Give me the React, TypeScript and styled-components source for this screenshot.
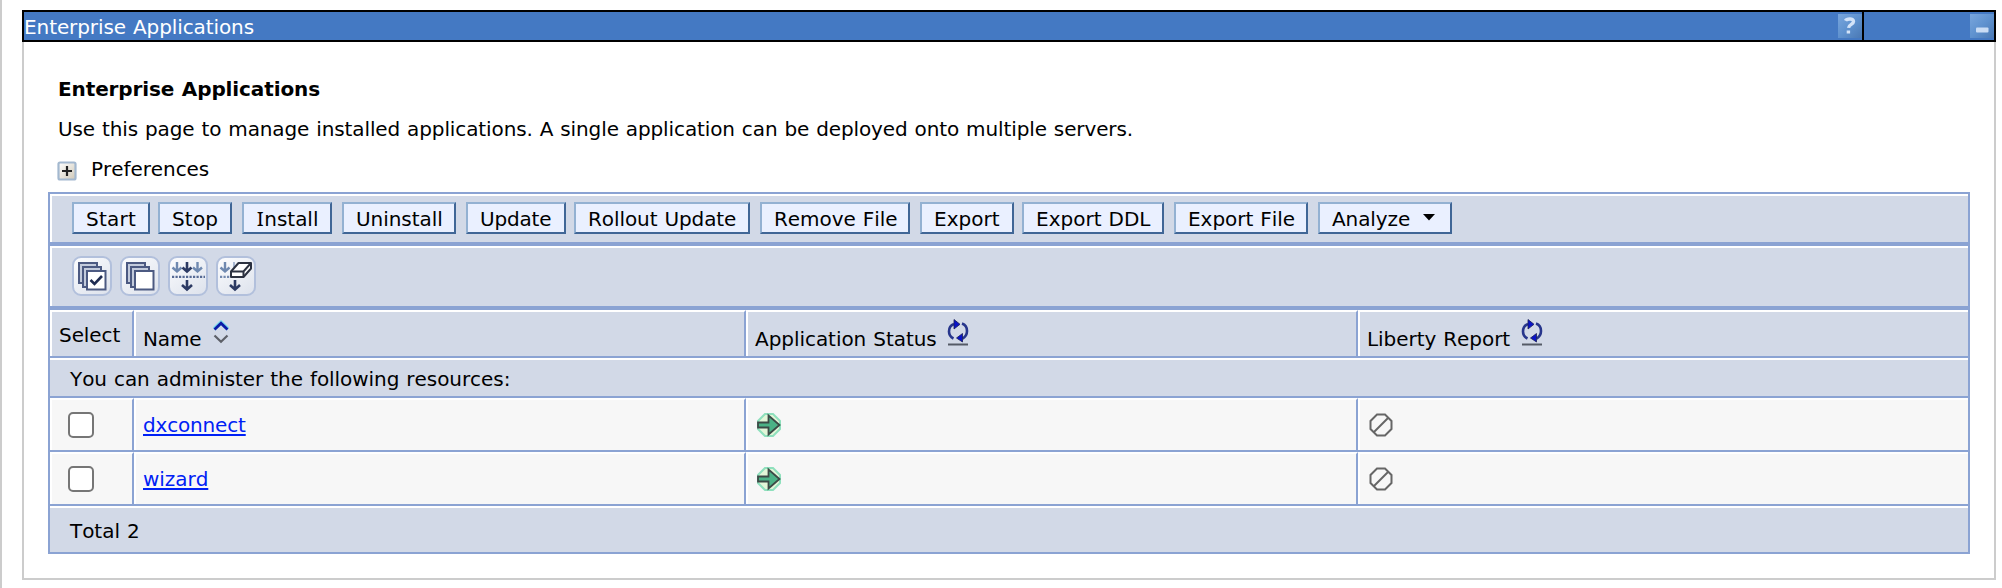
import React from "react";
import styled, { createGlobalStyle, css } from "styled-components";

const line = "#8ba3d3";
const fill = "#d2d9e7";
const rowFill = "#f7f7f7";
const grey = "#cccccc";

const GlobalStyle = createGlobalStyle`
  *, *::before, *::after { box-sizing: border-box; }
  body {
    margin: 0;
    background: #fff;
    color: #000;
    font: 20px/24px Verdana, "DejaVu Sans", sans-serif;
    font-kerning: none;
    word-spacing: 0.68px;
  }
  svg { display: block; flex: none; }
`;

const Page = styled.div`
  height: 588px;
  border-left: 2px solid ${grey};
  padding: 10px 6px 8px 20px;
  overflow: hidden;
`;

const Portlet = styled.section`
  height: 570px;
  display: flex;
  flex-direction: column;
`;

const TitleBar = styled.header`
  display: flex;
  height: 32px;
  border: 2px solid #000;
  background: #4479c3;
  color: #fff;
`;

const TitleCell = styled.div`
  flex: 1;
  display: flex;
  justify-content: space-between;
  align-items: flex-start;
  padding-top: 2px;
`;

const TitleText = styled.span`
  margin-top: 1px;
`;

const ToggleCell = styled.div`
  width: 132px;
  display: flex;
  justify-content: flex-end;
  align-items: center;
  border-left: 2px solid #000;
`;

const Body = styled.div`
  flex: 1;
  border: 2px solid ${grey};
  border-top: 0;
  padding: 35px 24px 0;
`;

const Txt = styled.span<{ $ls?: number }>`
  letter-spacing: ${(p) => p.$ls ?? 0}px;
  white-space: nowrap;
`;

const SerifCap = styled.span`
  font-family: "Noto Sans", sans-serif;
  font-size: 20.5px;
  line-height: 1;
  padding: 0 0.7px;
`;

const Intro = styled.div`
  padding-left: 10px;
`;

const Heading = styled.h1`
  margin: 0 0 16px;
  font-size: 20px;
  font-weight: bold;
`;

const Lead = styled.p`
  margin: 0 0 16px;
`;

const Preferences = styled.div`
  display: flex;
  height: 35px;
  align-items: flex-start;
  gap: 14px;
  svg { margin: 4px 0 0 -1px; }
`;

const Grid = styled.div`
  border: 2px solid ${line};
`;

const Toolbar = styled.div<{ $height: number; $top: number }>`
  display: flex;
  align-items: flex-start;
  height: ${(p) => p.$height}px;
  padding: ${(p) => p.$top}px 0 0 20px;
  border-top: 2px solid #fff;
  border-left: 2px solid #fff;
  background: ${fill};
`;

const Rule = styled.div`
  height: 4px;
  background: ${line};
`;

const ActionButton = styled.button<{ $width: number; $after: number }>`
  width: ${(p) => p.$width}px;
  height: 32px;
  margin: 0 ${(p) => p.$after}px 0 0;
  padding: 2px 0 0 12px;
  display: flex;
  align-items: center;
  border: 2px solid;
  border-color: #93b1d2 #406696 #406696 #93b1d2;
  background: #eaf0ff;
  color: #000;
  font: inherit;
  font-kerning: none;
  word-spacing: inherit;
  svg { margin: -4px 0 0 12.5px; }
`;

const IconButton = styled.button`
  width: 40px;
  height: 40px;
  margin: 0 8px 0 0;
  padding: 0;
  border: 2px solid #b2c0dc;
  border-radius: 9px;
  background: linear-gradient(145deg, #fbfcfe, #dde2ec);
  svg { margin: -2px; }
`;

const Row = styled.div<{ $height: number }>`
  display: grid;
  grid-template-columns: 84px 612px 612px 1fr;
  height: ${(p) => p.$height}px;
  border-bottom: 2px solid ${line};
`;

const cell = css`
  display: flex;
  align-items: flex-start;
  border-top: 2px solid #fff;
  border-left: 2px solid #fff;
  border-right: 2px solid ${line};
  &:last-child { border-right: 0; }
`;

const HeadCell = styled.div<{ $top: number }>`
  ${cell}
  background: ${fill};
  padding: ${(p) => p.$top}px 0 0 7px;
`;

const DataCell = styled.div<{ $left?: number }>`
  ${cell}
  background: ${rowFill};
  padding: 13px 0 0 ${(p) => p.$left ?? 9}px;
`;

const HeadIcon = styled.span<{ $gap: number; $up: number }>`
  margin: ${(p) => -p.$up}px 0 0 ${(p) => p.$gap}px;
`;

const Banner = styled.div<{ $height: number; $top: number; $last?: boolean }>`
  height: ${(p) => p.$height}px;
  padding: ${(p) => p.$top}px 0 0 20px;
  border-top: 2px solid #fff;
  border-bottom: ${(p) => (p.$last ? "0" : `2px solid ${line}`)};
  background: ${fill};
`;

const Link = styled.a`
  margin-left: -2px;
  color: #0021f5;
  text-decoration: underline;
  text-decoration-thickness: 2px;
  text-underline-offset: 2px;
  text-decoration-skip-ink: none;
`;

const Check = styled.input`
  appearance: none;
  width: 26px;
  height: 26px;
  margin: -1px 0 0;
  border: 2px solid #767676;
  border-radius: 5px;
  background: #fff;
`;

const HelpIcon = () => (
  <svg width="24" height="24" viewBox="0 0 24 24">
    <defs>
      <linearGradient id="badge" x1="0" y1="0" x2="1" y2="1">
        <stop offset="0" stopColor="#79a6dc" />
        <stop offset=".5" stopColor="#5f92cf" />
        <stop offset="1" stopColor="#4a78b3" />
      </linearGradient>
    </defs>
    <rect width="24" height="24" fill="url(#badge)" />
    <path d="M7.500 6.800c1-2 8-3.200 8 .8 0 3-4.700 2.600-4.900 6.300M10.400 16.600v3" fill="none" stroke="#d3e3f8" strokeWidth="3.400" />
  </svg>
);

const MinimizeIcon = () => (
  <svg width="24" height="24" viewBox="0 0 24 24">
    <rect width="24" height="24" fill="url(#badge)" />
    <rect x="6" y="13.500" width="12.500" height="5" rx="1" fill="#c9dcf4" />
  </svg>
);

const PlusIcon = () => (
  <svg width="20" height="20" viewBox="0 0 20 20">
    <defs>
      <linearGradient id="plus" x1="0" y1="0" x2="1" y2="1">
        <stop offset="0" stopColor="#fff" />
        <stop offset="1" stopColor="#cfc8b8" />
      </linearGradient>
    </defs>
    <rect x="1.500" y="1.500" width="17" height="17" rx="1.500" fill="url(#plus)" stroke="#a3b8cf" strokeWidth="2.200" />
    <path d="M5 10h10M10 5v10" stroke="#222" strokeWidth="2.200" />
  </svg>
);

const CaretIcon = () => (
  <svg width="12" height="7" viewBox="0 0 12 7">
    <path d="M0 0h12L6 6.500z" fill="#000" />
  </svg>
);

const Stack = ({ checked }: { checked?: boolean }) => (
  <svg width="40" height="40" viewBox="0 0 40 40">
    <g fill="#c3cbdc" stroke="#4c5a82" strokeWidth="2">
      <path d="M7 7h18v20H7z" />
      <path d="M11 11h18v20H11z" />
      <path d="M15 15h18.500v18.500H15z" fill="#fff" />
    </g>
    {checked && <path d="M18.500 24l4 4 7.500-8" fill="none" stroke="#1f2c52" strokeWidth="2.600" />}
  </svg>
);

const FilterIcon = () => (
  <svg width="40" height="40" viewBox="0 0 40 40" fill="none">
    <path d="M9 6v9.500M4.500 11.500L9 15.500l4.500-4M29.500 6v9.500M25 11.500l4.500 4 4.500-4" stroke="#6f89b0" strokeWidth="2.400" />
    <path d="M19 6v9.500M14.500 11.500l4.500 4 4.500-4M19 24v9.500M14 29l5 4.500 5-4.500" stroke="#2c3a63" strokeWidth="2.600" />
    <path d="M4 20.800h33" stroke="#566a94" strokeWidth="2.200" strokeDasharray="2.200 1.300" />
  </svg>
);

const ClearFilterIcon = () => (
  <svg width="40" height="40" viewBox="0 0 40 40" fill="none">
    <path d="M9 6v9.500M4.500 11.500L9 15.500l4.500-4" stroke="#6f89b0" strokeWidth="2.400" />
    <path d="M18 6v5" stroke="#a9b8d2" strokeWidth="2" />
    <path d="M19 24v9.500M14 29l5 4.500 5-4.500" stroke="#2c3a63" strokeWidth="2.600" />
    <path d="M4 20.800h10" stroke="#7389ae" strokeWidth="2.200" strokeDasharray="2.200 1.300" />
    <path d="M15 15.500L22.500 7H35v5.500L27.500 21H15z" fill="#fff" stroke="#2b3140" strokeWidth="2" strokeLinejoin="round" />
    <path d="M15 15.500h12.500L35 7M27.500 15.500V21" stroke="#2b3140" strokeWidth="2" />
  </svg>
);

const SortIcon = () => (
  <svg width="16" height="25" viewBox="0 0 16 25" fill="none">
    <path d="M1 9l7-6.500L15 9" stroke="#7fdcec" strokeWidth="4" />
    <path d="M1.500 9.500L8 3.300l6.500 6.200" stroke="#0a1aa8" strokeWidth="2.800" />
    <path d="M1.500 15.500l6.500 6.300 6.500-6.300" stroke="#5d6068" strokeWidth="2.200" />
  </svg>
);

const RefreshIcon = () => (
  <svg width="22" height="27" viewBox="0 0 22 27" fill="none">
    <path d="M6.500 19.500C3.500 18 2 15.500 2 12.500c0-4 2-6.500 5-7.500" stroke="#27368c" strokeWidth="2.600" />
    <path d="M15 4.500c3.500 1.200 5 4 5 7.500 0 3.800-1.800 6-4.500 7.500" stroke="#27368c" strokeWidth="2.600" />
    <path d="M7 .5L13 5.300 7 10z" fill="#0a14c8" stroke="#1a1f55" strokeWidth=".8" />
    <path d="M15.500 14.500L9.500 19l6 4z" fill="#0a14c8" stroke="#1a1f55" strokeWidth=".8" />
    <path d="M1 25.500h20" stroke="#555a66" strokeWidth="2" />
  </svg>
);

const StartedIcon = () => (
  <svg width="24" height="24" viewBox="0 0 24 24">
    <path d="M8 1h8l7 7v8l-7 7H8l-7-7V8z" fill="#e2f6d8" stroke="#8fe0bd" strokeWidth="2" />
    <path d="M1 9.500h10.500V2.500L22.500 12l-11 9.500V14.500H1z" fill="#4bb286" stroke="#3c4a46" strokeWidth="1.800" />
  </svg>
);

const UnavailableIcon = () => (
  <svg width="24" height="24" viewBox="0 0 24 24" fill="none" stroke="#666" strokeWidth="2">
    <path d="M8 1.500h8L22.500 8v8L16 22.500H8L1.500 16V8z" />
    <path d="M4.500 19.500l15-15" />
  </svg>
);

const actions: { label: React.ReactNode; width: number; after: number; ls: number }[] = [
  { label: "Start", width: 78, after: 8, ls: 0.23 },
  { label: "Stop", width: 74, after: 10, ls: 0.17 },
  { label: <><SerifCap>I</SerifCap>nstall</>, width: 90, after: 10, ls: -0.03 },
  { label: "Uninstall", width: 114, after: 10, ls: -0.05 },
  { label: "Update", width: 100, after: 8, ls: -0.17 },
  { label: "Rollout Update", width: 176, after: 10, ls: -0.08 },
  { label: "Remove File", width: 150, after: 10, ls: -0.04 },
  { label: "Export", width: 94, after: 8, ls: 0 },
  { label: "Export DDL", width: 142, after: 10, ls: 0 },
  { label: "Export File", width: 134, after: 10, ls: -0.03 },
];

const apps = [
  { name: "dxconnect", ls: -0.17 },
  { name: "wizard", ls: -0.05 },
];

export default function App() {
  return (
    <>
      <GlobalStyle />
      <Page>
        <Portlet>
          <TitleBar>
            <TitleCell>
              <TitleText><Txt $ls={-0.09}>Enterprise Applications</Txt></TitleText>
              <HelpIcon />
            </TitleCell>
            <ToggleCell><MinimizeIcon /></ToggleCell>
          </TitleBar>
          <Body>
            <Intro>
              <Heading><Txt $ls={-0.11}>Enterprise Applications</Txt></Heading>
              <Lead>
                <Txt $ls={-0.105}>Use this page to manage installed applications. A single application can be deployed onto multiple servers.</Txt>
              </Lead>
              <Preferences><PlusIcon /><Txt $ls={-0.06}>Preferences</Txt></Preferences>
            </Intro>
            <Grid>
              <Toolbar $height={48} $top={6}>
                {actions.map((a, i) => (
                  <ActionButton key={i} $width={a.width} $after={a.after}>
                    <Txt $ls={a.ls}>{a.label}</Txt>
                  </ActionButton>
                ))}
                <ActionButton $width={134} $after={0}>
                  <Txt $ls={-0.1}>Analyze</Txt>
                  <CaretIcon />
                </ActionButton>
              </Toolbar>
              <Rule />
              <Toolbar $height={60} $top={8}>
                <IconButton><Stack checked /></IconButton>
                <IconButton><Stack /></IconButton>
                <IconButton><FilterIcon /></IconButton>
                <IconButton><ClearFilterIcon /></IconButton>
              </Toolbar>
              <Rule />
              <Row $height={48}>
                <HeadCell $top={11}><Txt $ls={-0.07}>Select</Txt></HeadCell>
                <HeadCell $top={15}>
                  <Txt $ls={-0.16}>Name</Txt>
                  <HeadIcon $gap={12} $up={7}><SortIcon /></HeadIcon>
                </HeadCell>
                <HeadCell $top={15}>
                  <Txt $ls={-0.045}>Application Status</Txt>
                  <HeadIcon $gap={10} $up={8}><RefreshIcon /></HeadIcon>
                </HeadCell>
                <HeadCell $top={15}>
                  <Txt $ls={-0.05}>Liberty Report</Txt>
                  <HeadIcon $gap={11} $up={8}><RefreshIcon /></HeadIcon>
                </HeadCell>
              </Row>
              <Banner $height={40} $top={7}>
                <Txt $ls={-0.05}>You can administer the following resources:</Txt>
              </Banner>
              {apps.map((a) => (
                <Row key={a.name} $height={54}>
                  <DataCell $left={16}><Check type="checkbox" /></DataCell>
                  <DataCell>
                    <Link href="#"><Txt $ls={a.ls}>{a.name}</Txt></Link>
                  </DataCell>
                  <DataCell><StartedIcon /></DataCell>
                  <DataCell><UnavailableIcon /></DataCell>
                </Row>
              ))}
              <Banner $height={46} $top={11} $last><Txt $ls={-0.04}>Total 2</Txt></Banner>
            </Grid>
          </Body>
        </Portlet>
      </Page>
    </>
  );
}
